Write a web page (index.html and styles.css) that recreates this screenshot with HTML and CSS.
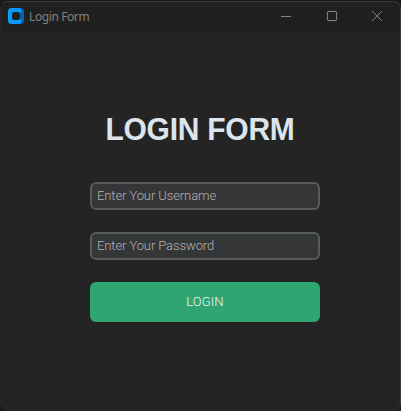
FILE: index.html
```html
<!DOCTYPE html>
<html lang="en">
<head>
<meta charset="utf-8">
<title>Login Form</title>
<link rel="stylesheet" href="styles.css">
</head>
<body>
<div class="window">
  <header class="titlebar">
    <svg class="app-icon" width="16" height="16" viewBox="0 0 16 16">
      <path fill="#0862ac" d="M10 0H12.5Q16 0 16 3.5V12.5Q16 16 12.5 16H10V12Q12 12 12 10V6Q12 4 10 4Z"/>
      <path fill="#0a9bfa" fill-rule="evenodd" d="M3.5 0H11Q13.5 .5 13.5 3.5L12 5.5Q11.5 4 10 4H6Q4 4 4 6V10Q4 12 6 12H10Q11.5 12 12 10.5L13.5 12.5Q13.5 15.5 11 16H3.5Q0 16 0 12.5V3.5Q0 0 3.5 0Z"/>
    </svg>
    <span class="caption">Login Form</span>
    <div class="controls">
      <svg width="10" height="10" viewBox="0 0 10 10"><path d="M0 5.5H10"/></svg>
      <svg width="10" height="10" viewBox="0 0 10 10"><rect x=".5" y=".5" width="9" height="9" rx=".6"/></svg>
      <svg width="10" height="10" viewBox="0 0 10 10"><path d="M.3.3L9.7 9.7M9.7.3L.3 9.7"/></svg>
    </div>
  </header>
  <form class="login">
    <h1>LOGIN FORM</h1>
    <input class="entry" type="text" placeholder="Enter Your Username">
    <input class="entry" type="password" placeholder="Enter Your Password">
    <button class="submit" type="button">LOGIN</button>
  </form>
</div>
</body>
</html>
```
FILE: styles.css
```css
* { box-sizing: border-box; }
body {
  margin: 0;
  background: #191919;
  overflow: hidden;
}
.window {
  width: 401px;
  height: 410px;
  margin-top: 1px;
  border: 1px solid #3b3b3b;
  border-left-color: #262626;
  border-bottom: 0;
  border-radius: 8px;
  background: #242424;
  overflow: hidden;
}
.titlebar {
  height: 30px;
  padding: 0 18px 0 7px;
  display: flex;
  align-items: center;
  background: #202020;
}
.app-icon { margin-top: -2px; }
.caption {
  margin-left: 5px;
  font: 12px/16px "Noto Sans", sans-serif;
  letter-spacing: -0.4px;
  color: #808080;
}
.controls {
  margin: -2px 0 0 auto;
  display: flex;
  gap: 35.5px;
}
.controls svg {
  fill: none;
  stroke: #858585;
}
.login {
  width: 230px;
  margin: 79px 0 0 89px;
  display: flex;
  flex-direction: column;
}
h1 {
  margin: 0 -20px 36px;
  font: bold 30px/35px "Liberation Sans", Arial, sans-serif;
  letter-spacing: -0.25px;
  text-align: center;
  white-space: nowrap;
  color: #dce4ee;
  transform: translateX(-5px) scaleY(1.05);
}
.entry {
  height: 28px;
  margin: 0 0 22px;
  padding: 0 5px 2px;
  border: 2px solid #565b5e;
  border-radius: 6px;
  background: #343638;
  font: 300 13px Roboto, sans-serif;
  letter-spacing: -0.1px;
}
.entry::placeholder { color: #b4b4b4; }
.submit {
  height: 40px;
  padding: 0 0 2px;
  border: 0;
  border-radius: 6px;
  background: #2fa572;
  font: 300 13px Roboto, sans-serif;
  letter-spacing: 0.1px;
  color: #f0f4fa;
}
```
